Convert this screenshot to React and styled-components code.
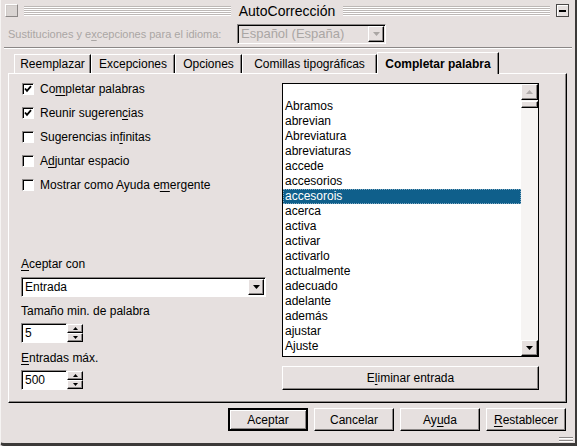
import React from 'react';
import styled, { createGlobalStyle, css } from 'styled-components';

const BG = '#e6e0df';
const SHADE = '#8b8786';
const DISABLED = '#aaa6a4';

const GlobalStyle = createGlobalStyle`
  html, body {
    margin: 0;
    padding: 0;
    background: ${BG};
  }
  body {
    font-family: 'Liberation Sans', Arial, sans-serif;
    font-size: 12px;
    color: #000;
  }
`;

const raised = css`
  border: 1px solid;
  border-color: #fff #000 #000 #fff;
  box-shadow: inset -1px -1px 0 ${SHADE};
  background: ${BG};
`;

const sunken = css`
  border: 1px solid;
  border-color: ${SHADE} #fff #fff ${SHADE};
  box-shadow: inset 1px 1px 0 #000;
`;

const Window = styled.div`
  width: 577px;
  height: 446px;
  box-sizing: border-box;
  background: ${BG};
  border-left: 1px solid #f6f4f3;
  border-right: 2px solid #3c3a39;
  border-bottom: 3px solid #3c3a39;
  border-bottom-left-radius: 4px;
  display: flex;
  flex-direction: column;
  position: relative;
  overflow: hidden;
`;

const TitleBar = styled.div`
  height: 21px;
  display: flex;
  align-items: center;
  padding: 0 6px 0 4px;
  gap: 6px;
`;

const CloseBox = styled.div`
  width: 11px;
  height: 11px;
  border: 1px solid;
  border-color: #fff #8b8786 #8b8786 #fff;
  box-shadow: inset 1px 1px 0 #cfcac8;
  background: #d9d4d2;
`;

const MinBox = styled.div`
  width: 11px;
  height: 11px;
  border: 1px solid #4a4746;
  box-shadow: inset 1px 1px 0 #fff;
  display: flex;
  align-items: center;
  justify-content: center;
  &::after {
    content: '';
    width: 7px;
    height: 2px;
    background: #000;
  }
`;

const Stripes = styled.div`
  flex: 1;
  height: 10px;
  background: repeating-linear-gradient(
    to bottom,
    #bdb8b6 0 1px,
    #ffffff 1px 2px
  );
`;

const Title = styled.div`
  font-size: 14px;
  padding: 0 2px;
  color: #000;
`;

const LangRow = styled.div`
  height: 25px;
  display: flex;
  align-items: center;
  padding-left: 7px;
`;

const LangLabel = styled.div`
  width: 229px;
  color: ${DISABLED};
  font-size: 11px;
  white-space: nowrap;
`;

const LangSelect = styled.div`
  width: 149px;
  height: 20px;
  box-sizing: border-box;
  ${sunken};
  background: ${BG};
  display: flex;
  align-items: center;
  justify-content: space-between;
  padding: 0 1px 0 3px;
  color: ${DISABLED};
  font-size: 13px;
`;

const Separator = styled.div`
  height: 1px;
  margin: 1px 3px 0 3px;
  background: ${SHADE};
  border-bottom: 1px solid #fff;
`;

const TabBar = styled.div`
  display: flex;
  align-items: flex-end;
  height: 22px;
  margin: 2px 0 0 13px;
  position: relative;
  z-index: 1;
`;

const Tab = styled.div`
  width: ${(p) => p.$w}px;
  height: ${(p) => (p.$active ? 22 : 19)}px;
  box-sizing: border-box;
  display: flex;
  align-items: center;
  justify-content: center;
  border-top: 1px solid #fff;
  border-left: 1px solid #fff;
  border-right: 1px solid #000;
  box-shadow: inset -1px 0 0 ${SHADE};
  font-weight: ${(p) => (p.$active ? 'bold' : 'normal')};
  background: ${BG};
  margin-bottom: ${(p) => (p.$active ? -1 : 0)}px;
  white-space: nowrap;
`;

const Panel = styled.div`
  margin: 0 8px 0 7px;
  height: 330px;
  box-sizing: border-box;
  border: 1px solid;
  border-color: #fff #000 #000 #fff;
  box-shadow: inset -1px -1px 0 ${SHADE};
  display: grid;
  grid-template-columns: 245px 257px;
  column-gap: 16px;
  padding: 3px 0 12px 12px;
`;

const LeftCol = styled.div`
  display: flex;
  flex-direction: column;
  justify-content: space-between;
`;

const CheckList = styled.div`
  display: flex;
  flex-direction: column;
`;

const CheckRow = styled.label`
  height: 24px;
  display: flex;
  align-items: center;
  gap: 6px;
  padding-left: 1px;
`;

const Box = styled.span`
  width: 12px;
  height: 12px;
  box-sizing: border-box;
  ${sunken};
  background: #fff;
  display: flex;
  align-items: center;
  justify-content: center;
`;

const Key = styled.span`
  text-decoration: underline;
  text-underline-offset: 2px;
`;

const FieldLabel = styled.div`
  height: 14px;
  line-height: 14px;
  margin-bottom: ${(p) => p.$gap || 5}px;
`;

const Combo = styled.div`
  width: 245px;
  height: 20px;
  box-sizing: border-box;
  ${sunken};
  background: #fff;
  display: flex;
  align-items: center;
  justify-content: space-between;
  padding: 0 1px 0 3px;
  margin-bottom: 7px;
  font-size: 12px;
`;

const DropButton = styled.span`
  width: 16px;
  height: 16px;
  box-sizing: border-box;
  ${raised};
  display: flex;
  align-items: center;
  justify-content: center;
`;

const Spin = styled.div`
  width: 62px;
  height: 20px;
  box-sizing: border-box;
  display: flex;
  margin-bottom: ${(p) => p.$gap || 0}px;
`;

const SpinInput = styled.div`
  flex: 1;
  box-sizing: border-box;
  ${sunken};
  background: #fff;
  display: flex;
  align-items: center;
  padding-left: 3px;
`;

const SpinButtons = styled.div`
  width: 16px;
  display: flex;
  flex-direction: column;
  padding: 1px 0;
  box-sizing: border-box;
`;

const SpinHalf = styled.span`
  flex: 1;
  box-sizing: border-box;
  ${raised};
  display: flex;
  align-items: center;
  justify-content: center;
`;

const RightCol = styled.div`
  display: flex;
  flex-direction: column;
  padding-top: 6px;
`;

const List = styled.div`
  height: 274px;
  box-sizing: border-box;
  border: 1px solid #000;
  background: #fff;
  display: flex;
  margin-bottom: 9px;
`;

const Items = styled.div`
  flex: 1;
  overflow: hidden;
`;

const Item = styled.div`
  height: 15px;
  line-height: 15px;
  padding-left: 2px;
  white-space: nowrap;
  background: ${(p) => (p.$selected ? '#0f5f8b' : 'transparent')};
  color: ${(p) => (p.$selected ? '#fff' : '#000')};
  outline: ${(p) => (p.$selected ? '1px dotted #7fa9c2' : 'none')};
  outline-offset: -1px;
`;

const ScrollBar = styled.div`
  width: 17px;
  display: flex;
  flex-direction: column;
  background: #f6f4f3;
`;

const ScrollButton = styled.span`
  height: 16px;
  box-sizing: border-box;
  ${raised};
  display: flex;
  align-items: center;
  justify-content: center;
`;

const Thumb = styled.span`
  height: 7px;
  margin-top: 1px;
  box-sizing: border-box;
  ${raised};
  flex: none;
`;

const Track = styled.span`
  flex: 1;
`;

const WideButton = styled.div`
  height: 24px;
  box-sizing: border-box;
  ${raised};
  display: flex;
  align-items: center;
  justify-content: center;
`;

const ButtonRow = styled.div`
  display: flex;
  justify-content: flex-end;
  gap: 6px;
  padding: 5px 9px 0 0;
`;

const DialogButton = styled.div`
  width: 80px;
  height: 23px;
  box-sizing: border-box;
  ${raised};
  ${(p) =>
    p.$default &&
    css`
      border: 2px solid #000;
      box-shadow: inset 1px 1px 0 #fff, inset -1px -1px 0 ${SHADE};
    `}
  display: flex;
  align-items: center;
  justify-content: center;
`;

const Grip = styled.div`
  position: absolute;
  right: 2px;
  bottom: 1px;
  width: 14px;
  height: 5px;
  background: repeating-linear-gradient(to bottom, ${SHADE} 0 1px, #fff 1px 2px, transparent 2px 3px);
`;

const Arrow = ({ up, color = '#000' }) => (
  <svg width="7" height="4" viewBox="0 0 7 4">
    <polygon points={up ? '0,4 7,4 3.5,0' : '0,0 7,0 3.5,4'} fill={color} />
  </svg>
);

const TinyArrow = ({ up }) => (
  <svg width="5" height="3" viewBox="0 0 5 3">
    <polygon points={up ? '0,3 5,3 2.5,0' : '0,0 5,0 2.5,3'} fill="#000" />
  </svg>
);

const Check = () => (
  <svg width="8" height="8" viewBox="0 0 8 8">
    <path d="M1 3.5 L3 5.8 L7 1.2" stroke="#000" strokeWidth="1.8" fill="none" />
  </svg>
);

const words = [
  '',
  'Abramos',
  'abrevian',
  'Abreviatura',
  'abreviaturas',
  'accede',
  'accesorios',
  'accesorois',
  'acerca',
  'activa',
  'activar',
  'activarlo',
  'actualmente',
  'adecuado',
  'adelante',
  'además',
  'ajustar',
  'Ajuste',
  'alineación',
];

const checks = [
  { on: true, label: ['Co', 'm', 'pletar palabras'] },
  { on: true, label: ['Reunir sugeren', 'c', 'ias'] },
  { on: false, label: ['Sugerencias in', 'f', 'initas'] },
  { on: false, label: ['A', 'd', 'juntar espacio'] },
  { on: false, label: ['Mostrar como Ayuda e', 'm', 'ergente'] },
];

const tabs = [
  { label: 'Reemplazar', w: 77 },
  { label: 'Excepciones', w: 84 },
  { label: 'Opciones', w: 67 },
  { label: 'Comillas tipográficas', w: 135 },
  { label: 'Completar palabra', w: 122, active: true },
];

export default function App() {
  return (
    <>
      <GlobalStyle />
      <Window>
        <TitleBar>
          <CloseBox />
          <Stripes />
          <Title>AutoCorrección</Title>
          <Stripes />
          <MinBox />
        </TitleBar>

        <LangRow>
          <LangLabel>
            Sustituciones y e<Key>x</Key>cepciones para el idioma:
          </LangLabel>
          <LangSelect>
            Español (España)
            <DropButton>
              <Arrow color={DISABLED} />
            </DropButton>
          </LangSelect>
        </LangRow>
        <Separator />

        <TabBar>
          {tabs.map((t) => (
            <Tab key={t.label} $w={t.w} $active={t.active}>
              {t.label}
            </Tab>
          ))}
        </TabBar>

        <Panel>
          <LeftCol>
            <CheckList>
              {checks.map((c) => (
                <CheckRow key={c.label.join('')}>
                  <Box>{c.on && <Check />}</Box>
                  <span>
                    {c.label[0]}
                    <Key>{c.label[1]}</Key>
                    {c.label[2]}
                  </span>
                </CheckRow>
              ))}
            </CheckList>

            <div>
              <FieldLabel $gap={6}>
                <Key>A</Key>ceptar con
              </FieldLabel>
              <Combo>
                Entrada
                <DropButton>
                  <Arrow />
                </DropButton>
              </Combo>
              <FieldLabel>Tamaño min. de palabra</FieldLabel>
              <Spin $gap={8}>
                <SpinInput>5</SpinInput>
                <SpinButtons>
                  <SpinHalf>
                    <TinyArrow up />
                  </SpinHalf>
                  <SpinHalf>
                    <TinyArrow />
                  </SpinHalf>
                </SpinButtons>
              </Spin>
              <FieldLabel>
                <Key>E</Key>ntradas máx.
              </FieldLabel>
              <Spin>
                <SpinInput>500</SpinInput>
                <SpinButtons>
                  <SpinHalf>
                    <TinyArrow up />
                  </SpinHalf>
                  <SpinHalf>
                    <TinyArrow />
                  </SpinHalf>
                </SpinButtons>
              </Spin>
            </div>
          </LeftCol>

          <RightCol>
            <List>
              <Items>
                {words.map((w, i) => (
                  <Item key={i} $selected={w === 'accesorois'}>
                    {w}
                  </Item>
                ))}
              </Items>
              <ScrollBar>
                <ScrollButton>
                  <Arrow up color="#b0abaa" />
                </ScrollButton>
                <Thumb />
                <Track />
                <ScrollButton>
                  <Arrow />
                </ScrollButton>
              </ScrollBar>
            </List>
            <WideButton>
              E<Key>l</Key>iminar entrada
            </WideButton>
          </RightCol>
        </Panel>

        <ButtonRow>
          <DialogButton $default>Aceptar</DialogButton>
          <DialogButton>Cancelar</DialogButton>
          <DialogButton>
            Ay<Key>u</Key>da
          </DialogButton>
          <DialogButton>
            <Key>R</Key>establecer
          </DialogButton>
        </ButtonRow>
        <Grip />
      </Window>
    </>
  );
}
